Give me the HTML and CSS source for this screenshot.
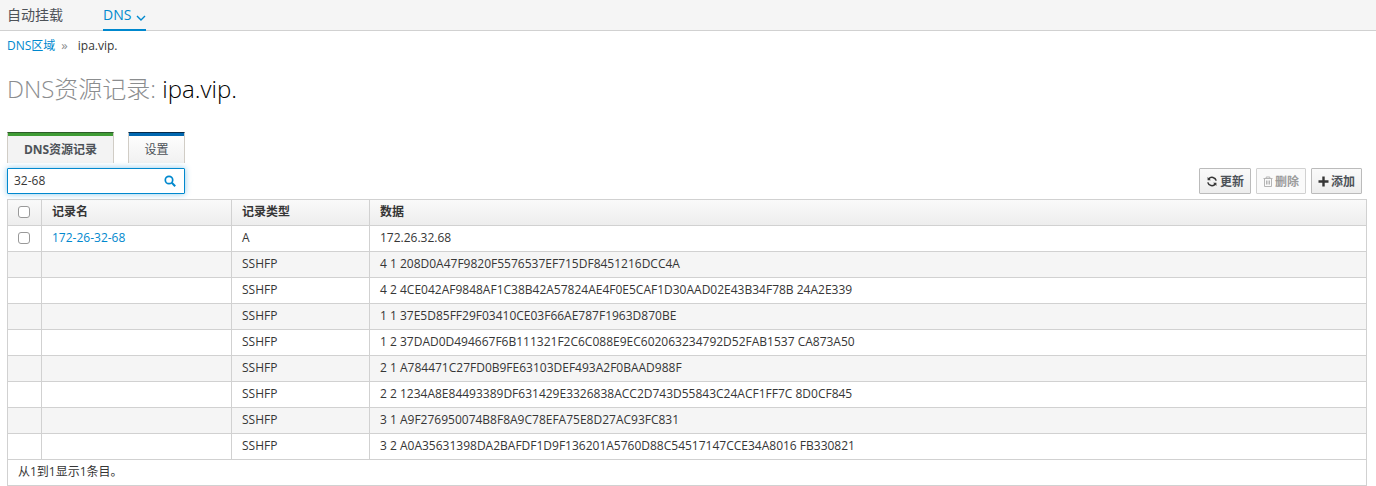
FILE: index.html
```html
<!DOCTYPE html>
<html lang="zh">
<head>
<meta charset="utf-8">
<title>DNS</title>
<link rel="stylesheet" href="styles.css">
</head>
<body>
<nav class="nav">
  <a class="nav-item">自动挂载</a>
  <a class="nav-item active">DNS
    <svg class="chev" width="10" height="6" viewBox="0 0 10 6"><path d="M1 1l4 4 4-4" fill="none" stroke="currentColor" stroke-width="1.4"/></svg>
  </a>
</nav>
<div class="crumbs"><a class="link">DNS区域</a><span class="sep">»</span><span>ipa.vip.</span></div>
<h1 class="title"><span class="title-a">DNS资源记录:</span> <span class="title-b">ipa.vip.</span></h1>
<div class="tabs">
  <div class="tab tab-green">DNS资源记录</div>
  <div class="tab tab-blue">设置</div>
</div>
<div class="toolbar">
  <div class="search">
    <span class="search-text">32-68</span>
    <svg width="12" height="12" viewBox="0 0 12 12"><circle cx="5" cy="5" r="3.7" fill="none" stroke="#0088ce" stroke-width="1.7"/><path d="M7.8 7.8l3.4 3.4" stroke="#0088ce" stroke-width="2"/></svg>
  </div>
  <div class="actions">
    <button class="btn">
      <svg width="12" height="11" viewBox="0 0 12 12"><path d="M10.6 5A4.7 4.7 0 0 0 2.4 3.2M1.4 7a4.7 4.7 0 0 0 8.2 1.8" fill="none" stroke="#363636" stroke-width="1.7"/><path d="M1.200 1v3.600h3.600zM10.800 11V7.400H7.200z" fill="#363636"/></svg>
      更新</button>
    <button class="btn btn-off">
      <svg width="10" height="11" viewBox="0 0 10 11"><path d="M.5 2.500h9M3.200 2.500V1h3.600v1.500M1.500 2.500V10.500h7V2.500M3.500 4.500v4M5 4.500v4M6.500 4.500v4" fill="none" stroke="#b5b5b5"/></svg>
      删除</button>
    <button class="btn">
      <svg width="11" height="11" viewBox="0 0 11 11"><path d="M5.500 .5v10M.5 5.500h10" stroke="#363636" stroke-width="2.400"/></svg>
      添加</button>
  </div>
</div>
<div class="grid">
  <div class="row head">
    <div class="c c1"><span class="check"></span></div>
    <div class="c c2">记录名</div>
    <div class="c c3">记录类型</div>
    <div class="c c4">数据</div>
  </div>
  <div class="row">
    <div class="c c1"><span class="check"></span></div>
    <div class="c c2"><a class="link">172-26-32-68</a></div>
    <div class="c c3">A</div>
    <div class="c c4">172.26.32.68</div>
  </div>
  <div class="row odd"><div class="c c1"></div><div class="c c2"></div><div class="c c3">SSHFP</div><div class="c c4">4 1 208D0A47F9820F5576537EF715DF8451216DCC4A</div></div>
  <div class="row"><div class="c c1"></div><div class="c c2"></div><div class="c c3">SSHFP</div><div class="c c4">4 2 4CE042AF9848AF1C38B42A57824AE4F0E5CAF1D30AAD02E43B34F78B 24A2E339</div></div>
  <div class="row odd"><div class="c c1"></div><div class="c c2"></div><div class="c c3">SSHFP</div><div class="c c4">1 1 37E5D85FF29F03410CE03F66AE787F1963D870BE</div></div>
  <div class="row"><div class="c c1"></div><div class="c c2"></div><div class="c c3">SSHFP</div><div class="c c4">1 2 37DAD0D494667F6B111321F2C6C088E9EC602063234792D52FAB1537 CA873A50</div></div>
  <div class="row odd"><div class="c c1"></div><div class="c c2"></div><div class="c c3">SSHFP</div><div class="c c4">2 1 A784471C27FD0B9FE63103DEF493A2F0BAAD988F</div></div>
  <div class="row"><div class="c c1"></div><div class="c c2"></div><div class="c c3">SSHFP</div><div class="c c4">2 2 1234A8E84493389DF631429E3326838ACC2D743D55843C24ACF1FF7C 8D0CF845</div></div>
  <div class="row odd"><div class="c c1"></div><div class="c c2"></div><div class="c c3">SSHFP</div><div class="c c4">3 1 A9F276950074B8F8A9C78EFA75E8D27AC93FC831</div></div>
  <div class="row"><div class="c c1"></div><div class="c c2"></div><div class="c c3">SSHFP</div><div class="c c4">3 2 A0A35631398DA2BAFDF1D9F136201A5760D88C54517147CCE34A8016 FB330821</div></div>
  <div class="foot">从1到1显示1条目。</div>
</div>
</body>
</html>
```
FILE: styles.css
```css
* { box-sizing: border-box; }
html, body { margin: 0; padding: 0; height: 486px; overflow: hidden; }
body {
  font-family: "Open Sans", "Noto Sans CJK SC", sans-serif;
  font-size: 12px;
  line-height: 17px;
  color: #363636;
  background: #fff;
}
.link { color: #0088ce; }
.nav {
  height: 31px;
  display: flex;
  gap: 40px;
  padding-left: 7px;
  background: #f5f5f5;
  border-bottom: 1px solid #d1d1d1;
}
.nav-item {
  height: 31px;
  padding-top: 5px;
  font-size: 14px;
  line-height: 19px;
  color: #4d5258;
  display: block;
  white-space: nowrap;
}
.nav-item.active {
  color: #0088ce;
  width: 43px;
  border-bottom: 2px solid #0088ce;
}
.chev { margin-left: 1px; vertical-align: -1px; }
.crumbs {
  display: flex;
  align-items: center;
  height: 17px;
  margin: 6px 0 0 7px;
  font-size: 12px;
}
.sep { color: #8b8d8f; margin: 0 10px 0 6px; font-size: 13px; }
.title {
  margin: 20px 0 0 7px;
  height: 30px;
  font-size: 24px;
  line-height: 30px;
  font-weight: 300;
}
.title-a { color: #8b8d8f; }
.title-b { color: #000; }
.tabs {
  display: flex;
  gap: 14px;
  margin: 28px 0 0 7px;
  height: 31px;
}
.tab {
  height: 31px;
  border: 1px solid #d1cdc6;
  border-bottom: 0;
  border-top: 1px solid;
  text-align: center;
  padding-top: 1px;
  line-height: 31px;
  font-size: 12px;
  color: #4d5258;
}
.tab-green {
  width: 107px;
  border-top-color: #2e5c2a;
  box-shadow: inset 0 3px 0 #3f9c35;
  background: #f3f3f3;
  font-weight: 700;
}
.tab-blue {
  width: 57px;
  border-top-color: #062a4a;
  box-shadow: inset 0 3px 0 #0067b0;
  background: linear-gradient(#fff, #f1f1f1);
}
.toolbar {
  display: flex;
  justify-content: space-between;
  align-items: flex-start;
  margin: 5px 14px 0 7px;
  height: 31px;
}
.search {
  width: 178px;
  height: 26px;
  border: 1px solid #0088ce;
  border-radius: 1px;
  box-shadow: 0 0 6px rgba(0, 136, 206, .45);
  display: flex;
  align-items: center;
  justify-content: space-between;
  padding: 0 8px 0 6px;
  background: #fff;
}
.search-text { margin-bottom: 2px; }
.actions { display: flex; gap: 5px; }
.btn {
  height: 26px;
  padding: 0 6px;
  font: 700 12px/17px "Open Sans", "Noto Sans CJK SC", sans-serif;
  color: #4d5258;
  border: 1px solid #bbb;
  border-radius: 1px;
  background: linear-gradient(#fafafa, #ededed);
  display: flex;
  align-items: center;
  gap: 2px;
}
.btn-off { background: #fafafa; border-color: #d1d1d1; color: #9c9c9c; }
.grid {
  margin: 0 9px 0 7px;
  border: 1px solid #d1d1d1;
}
.row { display: flex; height: 26px; border-bottom: 1px solid #d1d1d1; }
.row.odd { background: #f5f5f5; }
.row.head { background: linear-gradient(#fafafa, #ededed); font-weight: 700; }
.c {
  display: flex;
  align-items: center;
  padding: 0 0 2px 10px;
  border-right: 1px solid #d1d1d1;
  white-space: nowrap;
  color: #363636;
}
.c1 { width: 34px; padding: 0 2px 2px 0; justify-content: center; }
.c2 { width: 190px; }
.c3 { width: 138px; }
.c4 { flex: 1; border-right: 0; }
.check {
  display: block;
  width: 12px;
  height: 12px;
  border: 1px solid #999;
  border-radius: 3px;
  background: #fff;
}
.foot { height: 25px; padding-left: 10px; line-height: 23px; }
```
